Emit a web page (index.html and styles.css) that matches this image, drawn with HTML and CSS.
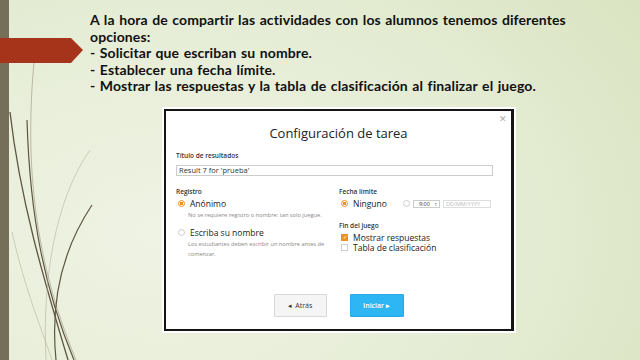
FILE: index.html
```html
<!DOCTYPE html>
<html lang="es">

<head>
    <meta charset="UTF-8">
    <meta name="viewport" content="width=device-width, initial-scale=1.0">
    <title>Configuración de tarea</title>
    <link rel="stylesheet" href="styles.css">
</head>

<body>
    <div class="slide">
        <svg class="deco" width="95" height="360" viewBox="0 0 95 360">
            <rect x="0" y="0" width="9" height="360" fill="#756e58" />
            <path d="M34 62 C26 150 30 250 76 360" fill="none" stroke="#8a8270" stroke-width="1" opacity="0.5" />
            <path d="M10 112 C20 200 44 280 68 360" fill="none" stroke="#5e5442" stroke-width="1.3" />
            <path d="M27 120 C30 220 45 290 74 360" fill="none" stroke="#5e5442" stroke-width="1.2" />
            <path d="M92 205 C62 250 50 300 56 360" fill="none" stroke="#5e5442" stroke-width="1.2" />
            <path d="M90 150 C55 200 42 280 46 360" fill="none" stroke="#b7b29e" stroke-width="1" opacity="0.6" />
            <path d="M12 232 C25 290 42 330 52 360" fill="none" stroke="#b7b29e" stroke-width="1" opacity="0.6" />
            <polygon points="0,38 71,38 83,50 71,63 0,63" fill="#a6341a" />
        </svg>

        <div class="slide-text">
            A la hora de compartir las actividades con los alumnos tenemos diferentes<br>
            opciones:<br>
            - Solicitar que escriban su nombre.<br>
            - Establecer una fecha límite.<br>
            - Mostrar las respuestas y la tabla de clasificación al finalizar el juego.
        </div>

        <div class="dialog">
            <div class="dialog-inner">
                <span class="close">&#x2715;</span>
                <h2 class="dialog-title">Configuración de tarea</h2>

                <div class="label">Título de resultados</div>
                <div class="text-input">Result 7 for 'prueba'</div>

                <div class="columns">
                    <div class="col">
                        <div class="label">Registro</div>
                        <div class="option"><span class="radio on"></span>Anónimo</div>
                        <div class="hint">No se requiere registro o nombre: tan solo juegue.</div>
                        <div class="option second"><span class="radio"></span>Escriba su nombre</div>
                        <div class="hint">Los estudiantes deben escribir un nombre antes de comenzar.</div>
                    </div>
                    <div class="col">
                        <div class="label">Fecha límite</div>
                        <div class="option">
                            <span class="radio on"></span>Ninguno
                            <span class="radio extra"></span>
                            <span class="select">9:00 <b>&#x2195;</b></span>
                            <span class="date">DD/MM/YYYY</span>
                        </div>
                        <div class="label end">Fin del juego</div>
                        <div class="check"><span class="box on">&#x2713;</span>Mostrar respuestas</div>
                        <div class="check"><span class="box"></span>Tabla de clasificación</div>
                    </div>
                </div>

                <div class="footer">
                    <button class="btn back">&#x25C2;&nbsp; Atrás</button>
                    <button class="btn start">Iniciar &#x25B8;</button>
                </div>
            </div>
        </div>
    </div>
</body>

</html>
```

FILE: styles.css
```css
body {
    margin: 0;
    font-family: "Open Sans", Arial, sans-serif;
}

.slide {
    position: relative;
    width: 640px;
    height: 360px;
    overflow: hidden;
    background: radial-gradient(ellipse 90% 110% at 25% 65%, #eff3e4 0%, #e6edd6 55%, #dae4c2 100%);
    padding-top: 12px;
    box-sizing: border-box;
}

.deco {
    position: absolute;
    left: 0;
    top: 0;
}

.slide-text {
    position: relative;
    margin-left: 90px;
    width: 540px;
    white-space: nowrap;
    font-family: Lato, "Liberation Sans", sans-serif;
    font-weight: bold;
    font-size: 14px;
    line-height: 16.6px;
    letter-spacing: 0.1px;
    word-spacing: 1px;
    font-variant-ligatures: none;
    color: #111;
}

.dialog {
    margin: 12px 0 0 162px;
    width: 354px;
    height: 226px;
    background: #fff;
    padding: 2px;
    box-sizing: border-box;
}

.dialog-inner {
    position: relative;
    height: 100%;
    border: 2px solid #151515;
    border-right-width: 3px;
    box-sizing: border-box;
    padding: 14px 10px 12px 10px;
    display: flex;
    flex-direction: column;
    color: #333;
}

.close {
    position: absolute;
    top: 1px;
    right: 4px;
    font-size: 9px;
    color: #aaa;
}

.dialog-title {
    margin: 0 0 10px 0;
    text-align: center;
    font-size: 13px;
    line-height: 16px;
    font-weight: normal;
    color: #222;
}

.label {
    font-size: 6.5px;
    line-height: 10px;
    font-weight: 600;
    color: #333;
}

.text-input {
    margin-top: 4px;
    width: 317px;
    height: 11px;
    box-sizing: border-box;
    border: 1px solid #ccc;
    font-size: 7.5px;
    line-height: 9px;
    padding-left: 2px;
    color: #333;
}

.columns {
    display: grid;
    grid-template-columns: 163px 1fr;
    margin-top: 11px;
}

.option {
    display: flex;
    align-items: center;
    height: 12px;
    margin-top: 1px;
    font-size: 8.5px;
    color: #222;
}

.option.second {
    margin-top: 7px;
}

.radio {
    width: 5px;
    height: 5px;
    border: 1px solid #ccc;
    border-radius: 50%;
    margin: 0 5px 0 2px;
    box-sizing: content-box;
    background: #fff;
}

.radio.on {
    border-color: #f0901e;
    background: radial-gradient(circle, #f0901e 0 45%, #fff 55%);
}

.radio.extra {
    margin-left: 16px;
    margin-right: 3px;
}

.select {
    height: 8px;
    width: 27px;
    box-sizing: border-box;
    border: 1px solid #ccc;
    font-size: 5.5px;
    line-height: 6px;
    padding-left: 5px;
    display: flex;
    justify-content: space-between;
    color: #333;
}

.select b {
    font-size: 5px;
    padding-right: 2px;
}

.date {
    height: 8px;
    width: 48px;
    margin-left: 3px;
    box-sizing: border-box;
    border: 1px solid #ddd;
    font-size: 5.5px;
    line-height: 6px;
    padding-left: 2px;
    color: #bbb;
}

.hint {
    margin-left: 12px;
    font-size: 5.7px;
    line-height: 10px;
    color: #888;
    width: 142px;
}

.label.end {
    margin-top: 11px;
    margin-bottom: 2px;
}

.check {
    display: flex;
    align-items: center;
    height: 10px;
    font-size: 8.5px;
    color: #222;
}

.box {
    width: 5px;
    height: 5px;
    border: 1px solid #ccc;
    margin: 0 5px 0 2px;
    font-size: 5px;
    line-height: 5px;
    text-align: center;
    color: #fff;
}

.box.on {
    background: #f0901e;
    border-color: #f0901e;
}

.footer {
    margin-top: auto;
    display: flex;
    justify-content: center;
    gap: 23px;
}

.btn {
    height: 23px;
    width: 53px;
    font-family: "Open Sans", Arial, sans-serif;
    font-size: 7px;
    border-radius: 1px;
    padding: 0;
}

.back {
    background: #f5f5f5;
    border: 1px solid #d8d8d8;
    color: #333;
}

.start {
    width: 54px;
    background: #2db5f4;
    border: 1px solid #27a9e6;
    color: #fff;
    font-weight: 600;
}
```
